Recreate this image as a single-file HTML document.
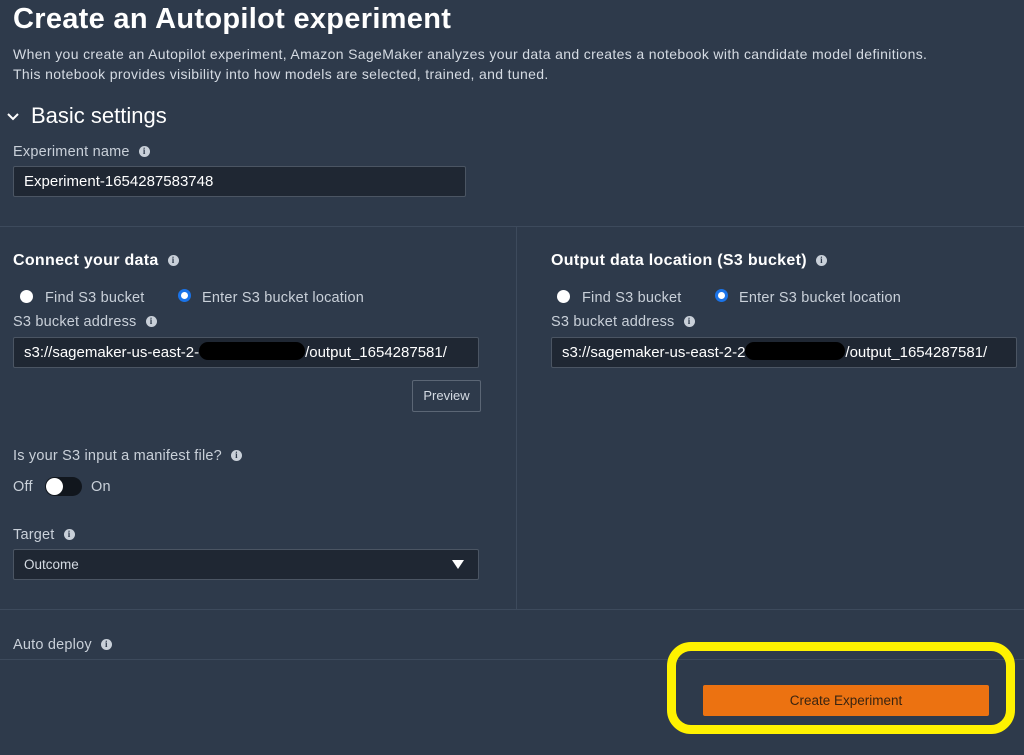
<!DOCTYPE html>
<html><head><meta charset="utf-8"><style>
*{box-sizing:border-box;margin:0;padding:0}
body{width:1024px;height:755px;background:#2e3a4b;font-family:"Liberation Sans",sans-serif;color:#d5dbe3;position:relative;overflow:hidden}
.a{position:absolute;white-space:nowrap}
.lbl{font-size:14.5px;color:#c9d0d9;letter-spacing:0.2px}
.info{display:inline-block;width:11px;height:11px;border-radius:50%;background:#c9d0d9;color:#2e3a4b;font-size:9px;font-weight:bold;text-align:center;line-height:11px;vertical-align:2px;margin-left:9px;font-family:"Liberation Serif",serif;letter-spacing:0}
.inp{position:absolute;background:#1f2733;border:1px solid #4b5563;border-radius:2px;color:#fff;font-size:15px;padding-left:10px;line-height:30px;overflow:hidden;white-space:nowrap}
.hr{position:absolute;left:0;width:1024px;height:1px;background:#3d4a5c}
.rad{position:absolute;width:13px;height:13px;border-radius:50%;background:#fff}
.rad.on{background:#fff;border:3.5px solid #1a73e8}
.black{display:inline-block;width:106px;height:18px;background:#000;border-radius:9px;vertical-align:-3px}
</style></head><body>
<div class="a" style="left:13px;top:3px;font-size:29px;font-weight:bold;color:#fff;letter-spacing:0.3px">Create an Autopilot experiment</div>
<div class="a" style="left:13px;top:44px;font-size:14px;line-height:20px;color:#d5dbe3;letter-spacing:0.35px">When you create an Autopilot experiment, Amazon SageMaker analyzes your data and creates a notebook with candidate model definitions.<br>This notebook provides visibility into how models are selected, trained, and tuned.</div>
<svg class="a" style="left:7px;top:112px" width="12" height="10"><path d="M1 2 L6 7 L11 2" stroke="#fff" stroke-width="2" fill="none"/></svg>
<div class="a" style="left:31px;top:103px;font-size:22px;color:#fff">Basic settings</div>
<div class="a lbl" style="left:13px;top:144px">Experiment name<span class="info">i</span></div>
<div class="inp" style="left:13px;top:166px;width:453px;height:31px">Experiment-1654287583748</div>
<div class="hr" style="top:226px"></div>
<div class="a" style="left:516px;top:226px;width:1px;height:383px;background:#3d4a5c"></div>
<div class="hr" style="top:609px"></div>
<div class="hr" style="top:659px"></div>

<div class="a" style="left:13px;top:252px;font-size:16px;font-weight:bold;color:#fff;letter-spacing:0.3px">Connect your data<span class="info">i</span></div>
<div class="rad" style="left:20px;top:290px"></div><div class="a lbl" style="left:45px;top:290px">Find S3 bucket</div>
<div class="rad on" style="left:178px;top:289px"></div><div class="a lbl" style="left:202px;top:290px">Enter S3 bucket location</div>
<div class="a lbl" style="left:13px;top:314px">S3 bucket address<span class="info">i</span></div>
<div class="inp" style="left:13px;top:337px;width:466px;height:31px">s3://sagemaker-us-east-2-<span class="black"></span>/output_1654287581/</div>
<div class="a" style="left:412px;top:380px;width:69px;height:32px;border:1px solid #5b6675;border-radius:2px;font-size:13px;color:#d5dbe3;text-align:center;line-height:30px">Preview</div>
<div class="a lbl" style="left:13px;top:448px">Is your S3 input a manifest file?<span class="info">i</span></div>
<div class="a lbl" style="left:13px;top:479px">Off</div>
<div class="a" style="left:45px;top:477px;width:37px;height:19px;border-radius:10px;background:#11161d"></div>
<div class="a" style="left:46px;top:478px;width:17px;height:17px;border-radius:50%;background:#fff"></div>
<div class="a lbl" style="left:91px;top:479px">On</div>
<div class="a lbl" style="left:13px;top:527px">Target<span class="info">i</span></div>
<div class="inp" style="left:13px;top:549px;width:466px;height:31px;font-size:13.5px;color:#d5dbe3">Outcome</div>
<svg class="a" style="left:452px;top:560px" width="12" height="9"><path d="M0 0 L12 0 L6 9Z" fill="#fff"/></svg>

<div class="a" style="left:551px;top:252px;font-size:16px;font-weight:bold;color:#fff;letter-spacing:0.3px">Output data location (S3 bucket)<span class="info">i</span></div>
<div class="rad" style="left:557px;top:290px"></div><div class="a lbl" style="left:582px;top:290px">Find S3 bucket</div>
<div class="rad on" style="left:715px;top:289px"></div><div class="a lbl" style="left:739px;top:290px">Enter S3 bucket location</div>
<div class="a lbl" style="left:551px;top:314px">S3 bucket address<span class="info">i</span></div>
<div class="inp" style="left:551px;top:337px;width:466px;height:31px">s3://sagemaker-us-east-2-2<span class="black" style="width:100px"></span>/output_1654287581/</div>

<div class="a lbl" style="left:13px;top:637px">Auto deploy<span class="info">i</span></div>
<div class="a" style="left:667px;top:642px;width:348px;height:92px;border:9px solid #fff200;border-radius:24px"></div>
<div class="a" style="left:703px;top:685px;width:286px;height:31px;background:#ec7211;border-radius:2px;font-size:13.5px;color:#3a2410;text-align:center;line-height:31px">Create Experiment</div>
</body></html>
